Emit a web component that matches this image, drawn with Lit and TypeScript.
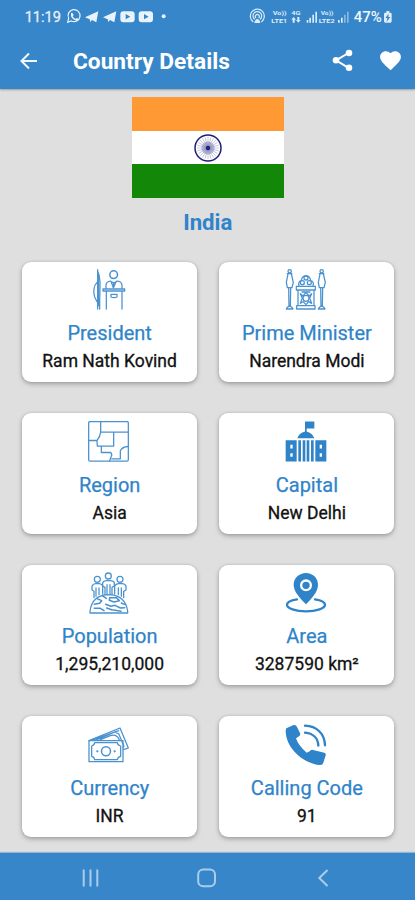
import { LitElement, html, css, svg, TemplateResult } from "lit";
import { customElement, property } from "lit/decorators.js";

const line = (box: string, body: TemplateResult) => svg`
  <svg viewBox=${box} width="42" height="42" fill="none" stroke="#4a92cf" stroke-width="3.8"
    stroke-linejoin="round" stroke-linecap="round">${body}</svg>`;
const solid = (box: string, body: TemplateResult) => svg`
  <svg viewBox=${box} width="42" height="42" fill="#2f84c9">${body}</svg>`;

const icons: Record<string, TemplateResult> = {
  president: line("235 42 126 126", svg`
    <path d="M264 44V162M270 162V130M264 48C269 60 272 78 271 98C270 122 272 140 266 152M262 82C252 92 250 112 255 126L262 140"/>
    <path d="M266 60V145" stroke-width="6"/>
    <circle cx="312" cy="59" r="11.5" stroke-width="4.6"/>
    <path d="M289 100V90Q290 80 302 78L312 84L324 78Q336 80 337 91V100M304 79L311 98L320 79M312 84V98"/>
    <path d="M280 102H345V108H280ZM290 109V162M337 109V162M304 118H322V126Q313 130 304 126Z"/>`),
  minister: line("227 42 126 126", svg`
    ${[241, 337].map(x => svg`<g transform="translate(${x} 0)">
      <circle cx="0" cy="49" r="5"/><path d="M-7 56H7M-5 57L-10 82L-7 98M5 57L11 82L7 98M-7 98H7M-3 99L-2 154M3 99L2 154M-10 162Q-7 154 0 154Q7 154 10 162Z"/></g>`)}
    <path d="M261 94H318V105H261ZM266 105V152M314 105V152M262 152H317V162H262ZM269 93Q265 80 276 77Q278 63 290 62Q302 63 304 77Q315 80 311 93"/>
    <circle cx="290" cy="69" r="6"/><circle cx="279" cy="83" r="6"/><circle cx="300" cy="83" r="6"/>
    <circle cx="290" cy="130" r="9"/>
    <path d="M273 116L281 123L290 112L299 123L307 116L301 130L307 145L298 140L290 149L281 140L273 145L279 130ZM278 111H302"/>`),
  region: line("235 46.5 126 126", svg`
    <rect x="237" y="48" width="119" height="119" rx="4"/>
    <path d="M273 49V80H355M273 80Q272 92 262 105H238M262 106L263 122H312V81M275 123V141H303Q309 148 304 154L300 166M306 160H332V136Q338 124 355 123"/>`),
  capital: solid("227 46.5 126 126", svg`
    <path d="M287 48H315V69H292V78Q308 82 315 98H264Q270 82 287 78Z"/>
    <path fill-rule="evenodd" d="M229 104H262V168H229ZM243 118V129H250V118ZM243 143V154H250V143Z"/>
    <path d="M267 104H275V168H267ZM280 104H288V168H280ZM292 104H300V168H292ZM305 104H313V168H305Z"/>
    <path fill-rule="evenodd" d="M318 104H351V168H318ZM331 118V129H338V118ZM331 143V154H338V143Z"/>`),
  population: line("235 42 126 126", svg`
    <circle cx="296" cy="54" r="9"/><circle cx="263" cy="64" r="9"/><circle cx="331" cy="64" r="9"/>
    <path d="M286 110V88L279 84V74Q281 69 290 68H303Q312 69 314 74V84L307 88V110M292 80V108M301 80V108"/>
    <path d="M253 119V100L247 96V84Q249 78 258 77H269Q277 78 279 84V108M259 90V115M268 90V110M342 119V100L349 96V84Q347 78 337 77H326Q318 78 315 84V108M335 90V115M326 90V110"/>
    <path d="M241 165V160Q247 111 297 110Q347 111 354 160V165Z"/>
    <path d="M262 122L276 128L270 136L254 139M278 113L290 121M300 119H320L329 128L313 132L299 127ZM254 151H272L283 158M288 139L304 145L316 142L332 150L345 149M291 150L308 156M312 156L334 160M335 135L344 139" stroke-width="4.6"/>`),
  area: solid("227 42 126 126", svg`
    <path fill-rule="evenodd" d="M290 45C270 45 253 60 253 80C253 101 272 120 290 139C308 120 326 101 326 80C326 60 310 45 290 45ZM290 64A18 18 0 1 1 290 100A18 18 0 1 1 290 64Z"/>
    <circle cx="290" cy="82" r="11"/>
    <path d="M263 124C245 127 233 132 233 140C233 151 258 160 290 160C322 160 347 151 347 140C347 132 335 127 317 124" fill="none" stroke="#2f84c9" stroke-width="7" stroke-linecap="round"/>`),
  currency: line("235 41 126 126", svg`
    <path d="M238 91H340V154H238ZM255 97H323Q324 105 333 107V138Q324 140 323 148H255Q254 140 246 138V107Q254 105 255 97Z"/>
    <circle cx="289" cy="123" r="13.5" stroke-width="4.6"/>
    <circle cx="263" cy="123" r="1.5"/><circle cx="315" cy="123" r="1.5"/>
    <path d="M238 91L331 53L356 113L341 118M262 88L316 65Q323 70 327 70L343 108L340 111M272 88L302 76Q322 70 330 91M247 90L327 61"/>`),
  calling: solid("227 41 126 126", svg`
    <path d="M231 54L251 45Q260 42 263 50L272 68Q275 76 266 80L260 84Q267 106 292 127L301 123Q307 116 314 120L345 127Q351 129 349 135L342 157Q340 165 331 164C282 160 230 114 229 63Q229 57 231 54Z"/>
    <path d="M287 46C322 47 346 70 347 105M287 67C311 69 326 84 327 106" fill="none" stroke="#2f84c9" stroke-width="7" stroke-linecap="round"/>`),
};

@customElement("info-card")
class InfoCard extends LitElement {
  @property() icon = "";
  @property() label = "";
  @property() value = "";
  static styles = css`
    :host {
      display: flex; flex-direction: column; align-items: center; box-sizing: border-box;
      height: 120.5px; padding: 7.5px 0 0 1px; border-radius: 9px; background: #fff;
      box-shadow: 0 2px 5px rgba(0, 0, 0, .28), 0 0 3px rgba(0, 0, 0, .1);
    }
    svg { display: block; flex: none; margin-right: 1.5px; }
    .label { margin-top: 9px; font-size: 20px; line-height: 26px; color: #2f84c9; white-space: nowrap; -webkit-text-stroke: .25px #2f84c9; }
    .value { margin-top: 2px; font-size: 17.5px; line-height: 26px; color: #111; white-space: nowrap; -webkit-text-stroke: .3px #111; }
  `;
  render() {
    return html`${icons[this.icon]}
      <div class="label">${this.label}</div>
      <div class="value">${this.value}</div>`;
  }
}

const cards = [
  ["president", "President", "Ram Nath Kovind"],
  ["minister", "Prime Minister", "Narendra Modi"],
  ["region", "Region", "Asia"],
  ["capital", "Capital", "New Delhi"],
  ["population", "Population", "1,295,210,000"],
  ["area", "Area", "3287590 km²"],
  ["currency", "Currency", "INR"],
  ["calling", "Calling Code", "91"],
];

@customElement("app-root")
class AppRoot extends LitElement {
  static styles = css`
    :host {
      display: flex; flex-direction: column; box-sizing: border-box; width: 415px; height: 900px;
      overflow: hidden; background: #dfdfdf; font-family: Roboto, sans-serif;
    }
    svg { display: block; flex: none; }
    header { height: 88.5px; flex: none; background: #3686c9; box-shadow: 0 1px 2px rgba(0, 0, 0, .3); color: #fff; }
    .status { display: flex; justify-content: space-between; height: 34px; padding: 0 21px 0 24px; }
    .bar { display: flex; align-items: center; height: 54px; padding: 0 12px 0 17px; }
    .title { flex: 1; margin-left: 32px; padding-top: 2px; font-size: 22.7px; font-weight: 700; line-height: 28px; }
    .share { margin-bottom: 2px; }
    .fav { margin-left: 23.5px; margin-bottom: 2px; }
    main { flex: 1; min-height: 0; display: flex; flex-direction: column; padding: 8.5px 21px 0 21.5px; }
    .flag { display: flex; flex-direction: column; align-self: center; width: 151.5px; height: 101px; }
    .band { flex: 1; display: flex; justify-content: center; align-items: center; }
    .saffron { background: #ff9933; }
    .white { background: #fff; }
    .green { background: #138808; }
    .country { margin-top: 11px; margin-bottom: 25.5px; text-align: center; font-size: 22.2px; line-height: 27px; font-weight: 700; color: #2f84c9; }
    .grid { display: grid; grid-template-columns: 1fr 1fr; column-gap: 22px; row-gap: 31px; }
    nav { height: 47.5px; flex: none; background: #3686c9; box-shadow: 0 -1px 1px rgba(54, 134, 201, .45); }
  `;
  render() {
    return html`
      <header>
        <div class="status">
          <svg width="146" height="34" viewBox="72 0 438 102" fill="#e9f3fb">
            <text x="74" y="67" font-size="46" textLength="109" lengthAdjust="spacingAndGlyphs" stroke="#e9f3fb" stroke-width=".8">11:19</text>
            <path d="M203 67L206 55A18 18 0 1 1 214 63Z" fill="none" stroke="#e9f3fb" stroke-width="3.6"/>
            <path d="M213 40Q217 36 219 42L221 46L218 49Q222 55 227 57L230 54L236 57Q234 64 225 61Q211 55 213 40Z"/>
            <path d="M255 52L295 34L289 67L276 60L271 66L269 58Z"/>
            <path d="M309 52L349 34L343 67L330 60L325 66L323 58Z"/>
            <path fill-rule="evenodd" d="M370 34H395Q404 34 404 43V58Q404 67 395 67H370Q361 67 361 58V43Q361 34 370 34ZM377 42V58L391 50Z"/>
            <path fill-rule="evenodd" d="M425 34H450Q459 34 459 43V58Q459 67 450 67H425Q416 67 416 58V43Q416 34 425 34ZM432 42V58L446 50Z"/>
            <circle cx="491" cy="49" r="6"/>
          </svg>
          <svg width="146" height="34" viewBox="129 0 438 102" fill="#dcecf8">
            <g fill="none" stroke="#dcecf8" stroke-width="3.6" stroke-linecap="round">
              <path d="M144 65A21 21 0 1 1 170 65M148 57A13 13 0 1 1 166 57M152 53A6 6 0 1 1 162 53"/>
            </g>
            <path d="M148 69Q150 58 157 57Q164 58 166 69Z"/>
            <g font-size="18" font-weight="700">
              <text x="203" y="45" textLength="42" lengthAdjust="spacingAndGlyphs">Vo))</text>
              <text x="199" y="69" textLength="48" lengthAdjust="spacingAndGlyphs">LTE1</text>
              <text x="259" y="45" textLength="28" lengthAdjust="spacingAndGlyphs">4G</text>
              <text x="347" y="45" textLength="38" lengthAdjust="spacingAndGlyphs">Vo))</text>
              <text x="341" y="69" textLength="48" lengthAdjust="spacingAndGlyphs">LTE2</text>
            </g>
            <path d="M266 51L273 59H269V68H263V59H259ZM280 68L273 60H277V51H283V60H287Z"/>
            <path d="M305 60H310V68H305ZM313 53H318V68H313ZM322 44H327V68H322ZM331 35H336V68H331ZM399 60H404V68H399ZM408 53H413V68H408Z"/>
            <path d="M417 44H422V68H417ZM426 35H431V68H426Z" opacity=".5"/>
            <text x="446" y="67" font-size="44" font-weight="500" textLength="84" lengthAdjust="spacingAndGlyphs" fill="#f2f8fd">47%</text>
            <path fill-rule="evenodd" d="M541 38H544V33H553V38H556Q560 38 560 42V64Q560 68 556 68H541Q537 68 537 64V42Q537 38 541 38ZM551 41L541 54H547L545 65L556 51H550Z"/>
          </svg>
        </div>
        <div class="bar">
          <svg width="24" height="24" viewBox="0 0 24 24" fill="none" stroke="#f3f8fc" stroke-width="2"><path d="M20 12H5M12 4.5L4.5 12L12 19.5"/></svg>
          <div class="title">Country Details</div>
          <svg class="share" width="25" height="25" viewBox="0 0 25 25" fill="#fff"><path d="M18.5 5L6 12.3L18.5 19.8" fill="none" stroke="#fff" stroke-width="2"/><circle cx="19" cy="5" r="3.3"/><circle cx="6" cy="12.3" r="3.3"/><circle cx="19" cy="19.7" r="3.3"/></svg>
          <svg class="fav" width="25" height="25" viewBox="0 0 24 24" fill="#fff"><path d="M12 21.35l-1.45-1.32C5.4 15.36 2 12.28 2 8.5 2 5.42 4.42 3 7.5 3c1.74 0 3.41.81 4.5 2.09C13.09 3.81 14.76 3 16.5 3 19.58 3 22 5.42 22 8.5c0 3.78-3.4 6.86-8.55 11.54L12 21.35z"/></svg>
        </div>
      </header>
      <main>
        <div class="flag">
          <div class="band saffron"></div>
          <div class="band white">
            <svg width="30" height="30" viewBox="-15 -15 30 30" fill="none" stroke="#20207f">
              <circle r="13" stroke-width="1.5"/>
              <circle r="6.5" fill="#20207f" stroke="none" opacity=".25"/>
              ${Array.from({ length: 12 }, (_, i) => svg`<path d="M0 -11V11" stroke-width=".4" opacity=".6" transform="rotate(${i * 15})"/>`)}
              <circle r="2.2" fill="#20207f" stroke="none"/>
            </svg>
          </div>
          <div class="band green"></div>
        </div>
        <div class="country">India</div>
        <div class="grid">
          ${cards.map(([icon, label, value]) => html`<info-card .icon=${icon} .label=${label} .value=${value}></info-card>`)}
        </div>
      </main>
      <nav>
        <svg width="415" height="47" viewBox="0 0 415 47" fill="none" stroke="#a9cdeb" stroke-width="2">
          <path d="M83.7 16.5V33.5M90.5 16.5V33.5M97.3 16.5V33.5"/>
          <rect x="198.2" y="16.4" width="16.8" height="16.8" rx="5"/>
          <path d="M327.5 17L319.3 25L327.5 33"/>
        </svg>
      </nav>
    `;
  }
}
